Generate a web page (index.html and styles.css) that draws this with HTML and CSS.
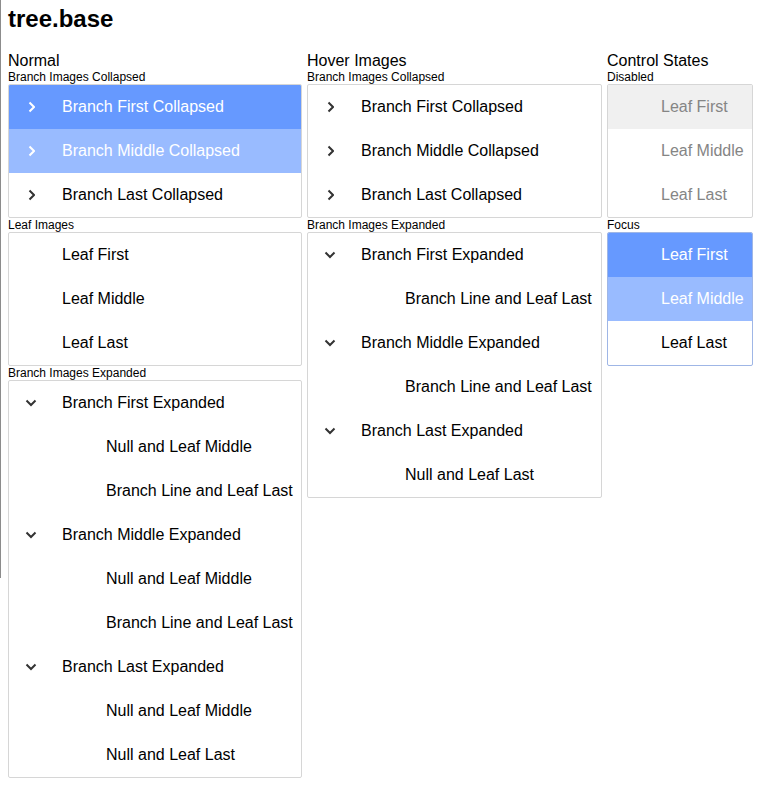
FILE: index.html
```html
<!DOCTYPE html>
<html>
<head>
<meta charset="utf-8">
<link rel="stylesheet" href="styles.css">
</head>
<body>
<div class="edge"></div>
<h1 class="title">tree.base</h1>
<div class="cols">
  <section class="col">
    <div class="head">Normal</div>
    <div class="lbl">Branch Images Collapsed</div>
    <div class="tree">
      <div class="row sel"><span class="tw"><svg width="8" height="12" viewBox="0 0 8 12"><path d="M2.5 1.5 L7 6 L2.5 10.5" class="chev"/></svg></span><span class="txt">Branch First Collapsed</span></div>
      <div class="row hov"><span class="tw"><svg width="8" height="12" viewBox="0 0 8 12"><path d="M2.5 1.5 L7 6 L2.5 10.5" class="chev"/></svg></span><span class="txt">Branch Middle Collapsed</span></div>
      <div class="row"><span class="tw"><svg width="8" height="12" viewBox="0 0 8 12"><path d="M2.5 1.5 L7 6 L2.5 10.5" class="chev"/></svg></span><span class="txt">Branch Last Collapsed</span></div>
    </div>
    <div class="lbl">Leaf Images</div>
    <div class="tree">
      <div class="row"><span class="tw"></span><span class="txt">Leaf First</span></div>
      <div class="row"><span class="tw"></span><span class="txt">Leaf Middle</span></div>
      <div class="row"><span class="tw"></span><span class="txt">Leaf Last</span></div>
    </div>
    <div class="lbl">Branch Images Expanded</div>
    <div class="tree">
      <div class="row"><span class="tw"><svg width="12" height="8" viewBox="0 0 12 8"><path d="M1.5 1.5 L6 6 L10.5 1.5" class="chev"/></svg></span><span class="txt">Branch First Expanded</span></div>
      <div class="row l2"><span class="tw"></span><span class="txt">Null and Leaf Middle</span></div>
      <div class="row l2"><span class="tw"></span><span class="txt">Branch Line and Leaf Last</span></div>
      <div class="row"><span class="tw"><svg width="12" height="8" viewBox="0 0 12 8"><path d="M1.5 1.5 L6 6 L10.5 1.5" class="chev"/></svg></span><span class="txt">Branch Middle Expanded</span></div>
      <div class="row l2"><span class="tw"></span><span class="txt">Null and Leaf Middle</span></div>
      <div class="row l2"><span class="tw"></span><span class="txt">Branch Line and Leaf Last</span></div>
      <div class="row"><span class="tw"><svg width="12" height="8" viewBox="0 0 12 8"><path d="M1.5 1.5 L6 6 L10.5 1.5" class="chev"/></svg></span><span class="txt">Branch Last Expanded</span></div>
      <div class="row l2"><span class="tw"></span><span class="txt">Null and Leaf Middle</span></div>
      <div class="row l2"><span class="tw"></span><span class="txt">Null and Leaf Last</span></div>
    </div>
  </section>
  <section class="col">
    <div class="head">Hover Images</div>
    <div class="lbl">Branch Images Collapsed</div>
    <div class="tree">
      <div class="row"><span class="tw"><svg width="8" height="12" viewBox="0 0 8 12"><path d="M2.5 1.5 L7 6 L2.5 10.5" class="chev"/></svg></span><span class="txt">Branch First Collapsed</span></div>
      <div class="row"><span class="tw"><svg width="8" height="12" viewBox="0 0 8 12"><path d="M2.5 1.5 L7 6 L2.5 10.5" class="chev"/></svg></span><span class="txt">Branch Middle Collapsed</span></div>
      <div class="row"><span class="tw"><svg width="8" height="12" viewBox="0 0 8 12"><path d="M2.5 1.5 L7 6 L2.5 10.5" class="chev"/></svg></span><span class="txt">Branch Last Collapsed</span></div>
    </div>
    <div class="lbl">Branch Images Expanded</div>
    <div class="tree">
      <div class="row"><span class="tw"><svg width="12" height="8" viewBox="0 0 12 8"><path d="M1.5 1.5 L6 6 L10.5 1.5" class="chev"/></svg></span><span class="txt">Branch First Expanded</span></div>
      <div class="row l2"><span class="tw"></span><span class="txt">Branch Line and Leaf Last</span></div>
      <div class="row"><span class="tw"><svg width="12" height="8" viewBox="0 0 12 8"><path d="M1.5 1.5 L6 6 L10.5 1.5" class="chev"/></svg></span><span class="txt">Branch Middle Expanded</span></div>
      <div class="row l2"><span class="tw"></span><span class="txt">Branch Line and Leaf Last</span></div>
      <div class="row"><span class="tw"><svg width="12" height="8" viewBox="0 0 12 8"><path d="M1.5 1.5 L6 6 L10.5 1.5" class="chev"/></svg></span><span class="txt">Branch Last Expanded</span></div>
      <div class="row l2"><span class="tw"></span><span class="txt">Null and Leaf Last</span></div>
    </div>
  </section>
  <section class="col narrow">
    <div class="head">Control States</div>
    <div class="lbl">Disabled</div>
    <div class="tree disabled">
      <div class="row dsel"><span class="tw"></span><span class="txt">Leaf First</span></div>
      <div class="row"><span class="tw"></span><span class="txt">Leaf Middle</span></div>
      <div class="row"><span class="tw"></span><span class="txt">Leaf Last</span></div>
    </div>
    <div class="lbl">Focus</div>
    <div class="tree focus">
      <div class="row sel"><span class="tw"></span><span class="txt">Leaf First</span></div>
      <div class="row hov"><span class="tw"></span><span class="txt">Leaf Middle</span></div>
      <div class="row"><span class="tw"></span><span class="txt">Leaf Last</span></div>
    </div>
  </section>
</div>
</body>
</html>
```

FILE: styles.css
```css
html, body {
  background: #fff;
}
body {
  margin: 0;
  padding: 0 8px;
  font-family: "Liberation Sans", Arial, sans-serif;
  color: #000;
}
.edge {
  position: absolute;
  left: 0;
  top: 0;
  width: 1px;
  height: 578px;
  background: #8c8c8c;
}
.title {
  margin: 0;
  padding-top: 5px;
  font-size: 24px;
  line-height: 28px;
  font-weight: bold;
  height: 47px;
}
.cols {
  display: grid;
  grid-template-columns: 294px 295px 146px;
  column-gap: 5px;
  align-items: start;
}
.col {
  display: flex;
  flex-direction: column;
}
.head {
  font-size: 16px;
  line-height: 18px;
}
.lbl {
  font-size: 12px;
  line-height: 14px;
}
.tree {
  border: 1px solid #d6d6d6;
  border-radius: 2px;
  overflow: hidden;
}
.row {
  display: flex;
  align-items: center;
  height: 44px;
  font-size: 16px;
  line-height: 18px;
  white-space: nowrap;
}
.row.l2 {
  padding-left: 44px;
}
.tw {
  width: 44px;
  flex: 0 0 44px;
  display: flex;
  justify-content: center;
  align-items: center;
}
.tw svg {
  display: block;
}
.txt {
  margin-left: 9px;
}
.chev {
  fill: none;
  stroke: #333;
  stroke-width: 2;
}
.row.sel {
  background: #6699ff;
  color: #fff;
}
.row.hov {
  background: #99bbff;
  color: #fff;
}
.row.sel .chev,
.row.hov .chev {
  stroke: #fff;
}
.disabled .row {
  color: #858585;
}
.row.dsel {
  background: #f0f0f0;
}
.focus {
  border-color: #9fb6e6;
}
```
